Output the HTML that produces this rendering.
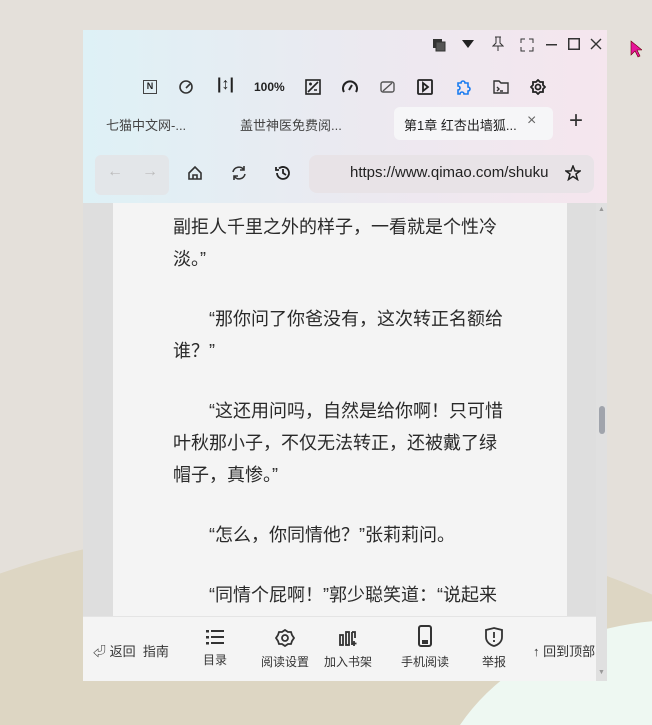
<!DOCTYPE html>
<html style="width:652px;height:725px;overflow:hidden"><head><meta charset="utf-8"><style>
*{margin:0;padding:0;box-sizing:border-box}
body{width:652px;height:725px;overflow:hidden;position:relative;background:#e4e0da;font-family:"Liberation Sans","Noto Sans CJK SC",sans-serif;color:#222}
.bgw{position:absolute;left:0;top:0;width:652px;height:725px;overflow:hidden}
.bg1{position:absolute;left:-250px;top:525px;width:1100px;height:600px;border-radius:50%;background:#ddd6c3}
.bg2{position:absolute;left:430px;top:620px;width:500px;height:400px;border-radius:50%;background:#eef8f2}
.win{position:absolute;left:83px;top:30px;width:524px;height:651px;background:#dedede;overflow:hidden}
.top{position:absolute;left:0;top:0;width:524px;height:173px;background:linear-gradient(90deg,#def1f6,#ece9f0 55%,#f5e6ee)}
.ic{position:absolute;font-size:12px;color:#222}
.tab{position:absolute;top:85px;font-size:13px;color:#444;white-space:nowrap}
.atab{position:absolute;left:311px;top:77px;width:159px;height:33px;background:#f6f6f8;border-radius:6px}
.nav{position:absolute;left:12px;top:125px;width:74px;height:40px;background:#e3e6e9;border-radius:6px}
.url{position:absolute;left:226px;top:125px;width:285px;height:38px;background:#e8e3e7;border-radius:8px;font-size:15px;color:#222;padding:9px 0 0 41px;white-space:nowrap;overflow:hidden}
.page{position:absolute;left:30px;top:173px;width:454px;height:420px;background:#f4f4f4;overflow:hidden}
.txt{position:absolute;left:60px;top:8px;width:332px;font-size:18px;line-height:32px;color:#2a2a2a}
.txt p{text-indent:36px;margin-bottom:28px}
.sb{position:absolute;left:513px;top:173px;width:11px;height:478px;background:#e0e0e0}
.thumb{position:absolute;left:3px;top:203px;width:6px;height:28px;border-radius:3px;background:#a0a4ac}
.bar{position:absolute;left:0;top:586px;width:513px;height:65px;background:#f4f4f4;border-top:1px solid #e4e4e4}
.bi{position:absolute;top:12px;text-align:center;font-size:12px;color:#333;width:60px}
.bi svg{display:block;margin:0 auto 6px}
</style></head><body>
<div class="bgw"><div class="bg1"></div><div class="bg2"></div></div>
<div class="win">
<div class="top">
 <svg style="position:absolute;left:349px;top:8px" width="14" height="14"><rect x="1" y="1" width="9" height="9" fill="#333"/><rect x="4" y="4" width="9" height="9" fill="#555" stroke="#333"/></svg>
 <svg style="position:absolute;left:379px;top:10px" width="12" height="8"><path d="M0 0H12L6 8Z" fill="#222"/></svg>
 <svg style="position:absolute;left:409px;top:6px" width="12" height="16" fill="none" stroke="#333"><path d="M3 1H9M4 1V7L1 10H11L8 7V1M6 10V15"/></svg>
 <svg style="position:absolute;left:437px;top:8px" width="14" height="14" fill="none" stroke="#333"><path d="M1 5V1H5M9 1H13V5M13 9V13H9M5 13H1V9"/></svg>
 <svg style="position:absolute;left:463px;top:14px" width="11" height="2"><rect width="11" height="1.5" fill="#333"/></svg>
 <svg style="position:absolute;left:485px;top:8px" width="12" height="12"><rect x=".75" y=".75" width="10.5" height="10.5" fill="none" stroke="#333" stroke-width="1.5"/></svg>
 <svg style="position:absolute;left:507px;top:8px" width="12" height="12" stroke="#333" stroke-width="1.4"><path d="M1 1L11 11M11 1L1 11"/></svg>
 <div class="ic" style="left:60px;top:50px;width:14px;height:14px;border:1.5px solid #444;font-size:9px;text-align:center;line-height:11px;font-weight:bold">N</div>
 <svg class="ic" style="left:95px;top:49px" width="16" height="16" fill="none" stroke="#333" stroke-width="1.6"><circle cx="8" cy="8" r="6"/><path d="M8 9L12 5"/></svg>
 <div class="ic" style="left:134px;top:46px;font-size:16px;font-weight:bold">|↕|</div>
 <div class="ic" style="left:171px;top:50px;font-weight:bold">100%</div>
 <svg class="ic" style="left:222px;top:49px" width="16" height="16" fill="none" stroke="#222" stroke-width="1.6"><rect x="1" y="1" width="14" height="14"/><path d="M3 13L13 3M4 5H7M5.5 3.5V6.5M9 11H12"/></svg>
 <svg class="ic" style="left:259px;top:49px" width="16" height="16" fill="none" stroke="#222" stroke-width="2"><path d="M2 13A7 7 0 1 1 14 13"/><path d="M7 11L10 6"/></svg>
 <svg class="ic" style="left:297px;top:50px" width="15" height="14" fill="none" stroke="#555" stroke-width="1.4"><rect x="1" y="2" width="13" height="10" rx="2"/><path d="M3 11L12 3"/></svg>
 <svg class="ic" style="left:334px;top:49px" width="16" height="16" fill="none" stroke="#222" stroke-width="1.8"><rect x="1" y="1" width="14" height="14" rx="1"/><path d="M6 4V12L11 8Z"/></svg>
 <svg class="ic" style="left:372px;top:49px" width="16" height="16" fill="none" stroke="#1a7cf0" stroke-width="1.6"><path d="M3 4H6A2 2 0 0 1 10 4H13V8A2 2 0 0 1 13 12V15H9A2 2 0 0 0 5 15H3V11A2 2 0 0 0 3 7Z"/></svg>
 <svg class="ic" style="left:410px;top:49px" width="16" height="15" fill="none" stroke="#333" stroke-width="1.4"><path d="M1 2H6L8 4H15V14H1Z"/><path d="M4 8L6 10L4 12M7 12H10"/></svg>
 <svg class="ic" style="left:447px;top:49px" width="16" height="16" fill="none" stroke="#222" stroke-width="1.8"><circle cx="8" cy="8" r="2.5"/><path d="M8 1L10 3L13 3L13 6L15 8L13 10L13 13L10 13L8 15L6 13L3 13L3 10L1 8L3 6L3 3L6 3Z"/></svg>
 <div class="tab" style="left:23px">七猫中文网-...</div>
 <div class="tab" style="left:157px">盖世神医免费阅...</div>
 <div class="atab"></div>
 <div class="tab" style="left:321px;color:#222">第1章 红杏出墙狐...</div>
 <div class="tab" style="left:444px;top:82px;font-size:16px;color:#666">×</div>
 <div class="tab" style="left:486px;top:77px;font-size:24px;color:#333;font-weight:300">+</div>
 <div class="nav"></div>
 <div class="ic" style="left:24px;top:133px;font-size:16px;color:#bbb">←</div>
 <div class="ic" style="left:59px;top:133px;font-size:16px;color:#bbb">→</div>
 <svg class="ic" style="left:105px;top:136px" width="14" height="14" fill="none" stroke="#333" stroke-width="1.6"><path d="M1 7L7 1L13 7V13H1Z"/><path d="M5 13V9H9V13"/></svg>
 <svg class="ic" style="left:148px;top:135px" width="16" height="16" fill="none" stroke="#333" stroke-width="1.6"><path d="M2 7A6 6 0 0 1 13 5M14 9A6 6 0 0 1 3 11M13 1V5H9M3 15V11H7"/></svg>
 <svg class="ic" style="left:192px;top:135px" width="16" height="16" fill="none" stroke="#222" stroke-width="1.8"><path d="M2 8A6 6 0 1 0 4 3.5M1 2V5H4"/><path d="M8 4V8L11 10"/></svg>
 <div class="url">https://www.qimao.com/shuku</div>
 <svg class="ic" style="left:482px;top:135px" width="16" height="16" fill="none" stroke="#222" stroke-width="1.5"><path d="M8 1L10 6H15L11 9L12.5 14.5L8 11.5L3.5 14.5L5 9L1 6H6Z"/></svg>
</div>
<div class="page"><div class="txt">
<p style="text-indent:0">副拒人千里之外的样子，一看就是个性冷<br>淡。”</p>
<p>“那你问了你爸没有，这次转正名额给<br>谁？”</p>
<p>“这还用问吗，自然是给你啊！只可惜<br>叶秋那小子，不仅无法转正，还被戴了绿<br>帽子，真惨。”</p>
<p>“怎么，你同情他？”张莉莉问。</p>
<p>“同情个屁啊！”郭少聪笑道：“说起来</p>
</div></div>
<div class="sb"><div style="position:absolute;left:2px;top:3px;font-size:7px;color:#999">▲</div><div class="thumb"></div><div style="position:absolute;left:2px;top:466px;font-size:7px;color:#999">▼</div></div>
<div class="bar">
 <div class="bi" style="left:10px;top:24px;width:90px;text-align:left;font-size:13px">⏎ 返回&nbsp; 指南</div>
 <div class="bi" style="left:102px"><svg width="18" height="16" fill="#333"><rect x="0" y="1" width="3" height="2.5"/><rect x="0" y="7" width="3" height="2.5"/><rect x="0" y="13" width="3" height="2.5"/><rect x="5" y="1" width="13" height="2"/><rect x="5" y="7" width="13" height="2"/><rect x="5" y="13" width="13" height="2"/></svg>目录</div>
 <div class="bi" style="left:172px"><svg width="20" height="18" fill="none" stroke="#333" stroke-width="1.8"><circle cx="10" cy="9" r="3"/><path d="M10 1L13 3H16L17 6L19 9L17 12L16 15H13L10 17L7 15H4L3 12L1 9L3 6L4 3H7Z"/></svg>阅读设置</div>
 <div class="bi" style="left:235px"><svg width="20" height="18" fill="none" stroke="#333" stroke-width="1.8"><rect x="2" y="6" width="3" height="10"/><rect x="8" y="3" width="3" height="13"/><path d="M14 3H17V9M14 3V16M16 12V17M13.5 14.5H18.5"/></svg>加入书架</div>
 <div class="bi" style="left:312px;top:8px"><svg width="16" height="22" fill="none" stroke="#333" stroke-width="2"><rect x="2" y="1" width="12" height="20" rx="2"/><rect x="6" y="16" width="4" height="2" fill="#333"/></svg>手机阅读</div>
 <div class="bi" style="left:381px;top:10px"><svg width="18" height="20" fill="none" stroke="#333" stroke-width="1.8"><path d="M9 1L17 3V10C17 15 13 18 9 19C5 18 1 15 1 10V3Z"/><path d="M9 5V11M9 13V15"/></svg>举报</div>
 <div class="bi" style="left:450px;top:24px;width:80px;text-align:left;font-size:13px;white-space:nowrap">↑ 回到顶部</div>
</div>
</div>
<svg style="position:absolute;left:630px;top:40px" width="12" height="18"><path d="M1 1V15L5 11L8 17L10 16L7 10H12Z" fill="#e6159a" stroke="#600" stroke-width=".6"/></svg>
</body></html>
